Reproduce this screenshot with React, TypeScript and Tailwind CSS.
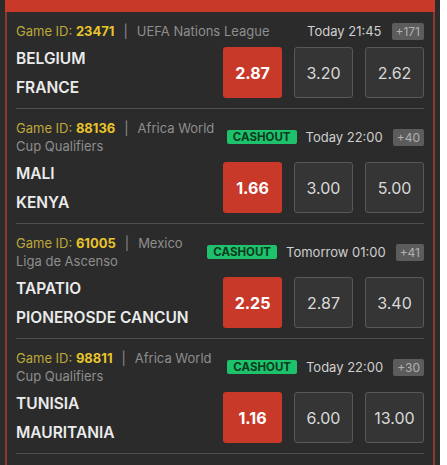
const games = [
  {
    id: '23471',
    league: ['UEFA Nations League'],
    cashout: false,
    time: 'Today 21:45',
    more: '+171',
    home: 'BELGIUM',
    away: 'FRANCE',
    odds: ['2.87', '3.20', '2.62'],
  },
  {
    id: '88136',
    league: ['Africa World', 'Cup Qualifiers'],
    cashout: true,
    time: 'Today 22:00',
    more: '+40',
    home: 'MALI',
    away: 'KENYA',
    odds: ['1.66', '3.00', '5.00'],
  },
  {
    id: '61005',
    league: ['Mexico', 'Liga de Ascenso'],
    cashout: true,
    time: 'Tomorrow 01:00',
    more: '+41',
    home: 'TAPATIO',
    away: 'PIONEROSDE CANCUN',
    odds: ['2.25', '2.87', '3.40'],
  },
  {
    id: '98811',
    league: ['Africa World', 'Cup Qualifiers'],
    cashout: true,
    time: 'Today 22:00',
    more: '+30',
    home: 'TUNISIA',
    away: 'MAURITANIA',
    odds: ['1.16', '6.00', '13.00'],
  },
];

type Game = (typeof games)[number];

function GameRow({ game }: { game: Game }) {
  return (
    <div className="pt-[10px] pb-[10px] border-b border-[#4f4f4f]">
      {/* meta line */}
      <div className="flex items-center justify-between text-[13px] leading-[18px]">
        <div className="text-[#8e8e8e]">
          <div>
            <span className="text-[#bda83a]">Game ID: </span>
            <span className="text-[#e8c42c] font-bold">{game.id}</span>
            <span className="text-[#8e8e8e] mx-[9px]">|</span>
            <span>{game.league[0]}</span>
          </div>
          {game.league[1] && <div>{game.league[1]}</div>}
        </div>
        <div className="flex items-center">
          {game.cashout && (
            <span className="bg-[#1fc26c] text-[#0b3a1e] text-[11.5px] font-bold leading-[14px] px-[6px] rounded-[2px] mr-[9px]">
              CASHOUT
            </span>
          )}
          <span className="text-[#cfcfcf] text-[13px]">{game.time}</span>
          <span className="ml-[10px] bg-[#5c5c5c] text-[#b0b0b0] text-[12px] leading-[17px] px-[4px] rounded-[2px]">
            {game.more}
          </span>
        </div>
      </div>

      {/* teams + odds */}
      <div className="flex items-center justify-between h-[51px] mt-[7px]">
        <div className="text-[#ebebeb] font-semibold text-[15.5px] leading-[29px]">
          <div>{game.home}</div>
          <div>{game.away}</div>
        </div>
        <div className="flex gap-[12px]">
          {game.odds.map((o, i) => (
            <div
              key={i}
              className={
                i === 0
                  ? 'w-[59px] h-[51px] flex items-center justify-center rounded-[3px] bg-[#c9392a] text-white font-bold text-[16px]'
                  : 'w-[59px] h-[51px] flex items-center justify-center rounded-[3px] bg-[#353535] border border-[#585858] text-[#d9d9d9] text-[16px]'
              }
            >
              {o}
            </div>
          ))}
        </div>
      </div>
    </div>
  );
}

export default function App() {
  return (
    <div
      className="w-[447px] h-[465px] bg-white overflow-hidden"
      style={{ fontFamily: 'Inter, "Open Sans", sans-serif' }}
    >
      <div className="w-[440px] h-full bg-[#2b2b2b] pl-[5px] pr-[5px]">
        <div className="h-[12px] bg-[#c9392a]" />
        <div className="h-full border-x-2 border-[#8a3a2d] px-[9px]">
          {games.map((g) => (
            <GameRow key={g.id} game={g} />
          ))}
        </div>
      </div>
    </div>
  );
}
